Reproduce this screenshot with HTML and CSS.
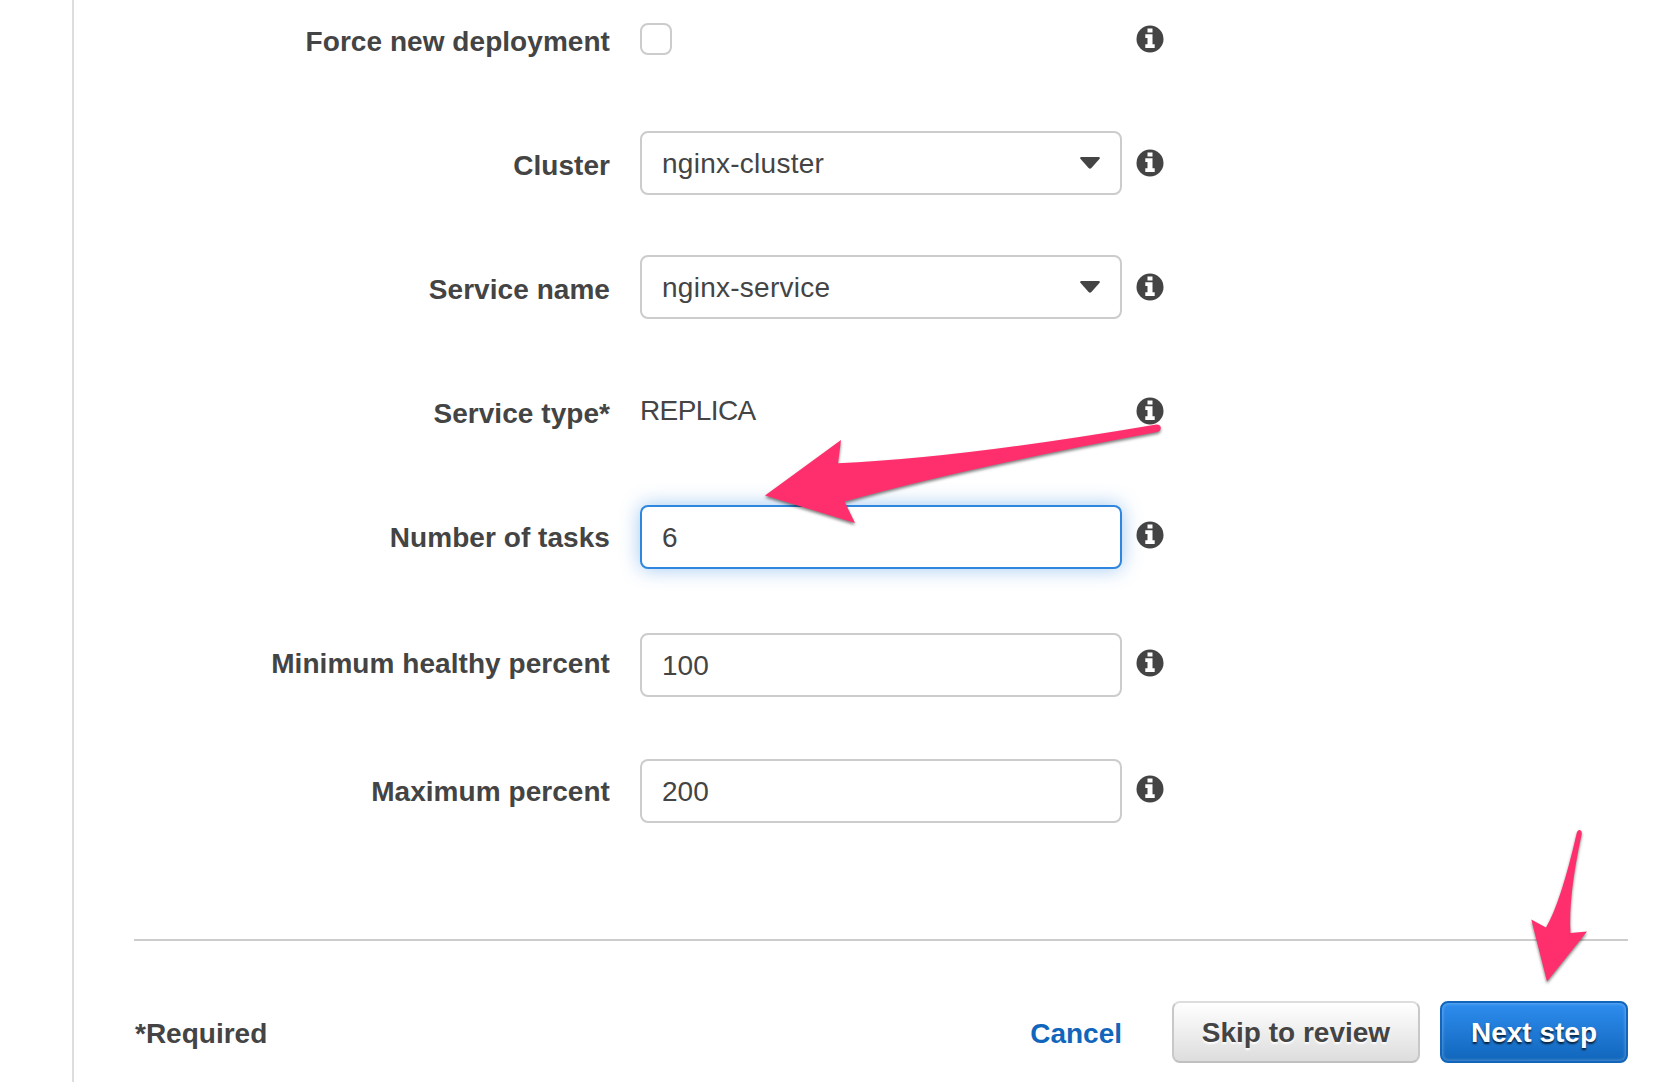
FILE: index.html
```html
<!DOCTYPE html>
<html lang="en">
<head>
<meta charset="utf-8">
<title>Configure service</title>
<link rel="stylesheet" href="styles.css">
</head>
<body>
<svg class="defs" width="0" height="0" aria-hidden="true">
  <symbol id="info" viewBox="0 0 28 28">
    <circle cx="14" cy="14" r="13.5" fill="#444"/>
    <path fill="#fff" d="M11.5 3.5h5v4h-5zM9.3 9.3h7.2v9.900h2.200v3.800H9.300v-3.800h2.200v-6.100H9.300z"/>
  </symbol>
  <symbol id="caret" viewBox="0 0 20 12">
    <path fill="#444" d="M1 0h18q1.4.6.6 1.8L11.4 11q-1.4 1.3-2.8 0L.4 1.8Q-.4.6 1 0z"/>
  </symbol>
</svg>
<div class="page">
  <aside class="rail"></aside>
  <main class="content">
    <form class="form">
      <div class="row">
        <label class="label">Force new deployment</label>
        <div class="control"><span class="checkbox"></span></div>
        <svg class="info"><use href="#info"/></svg>
      </div>
      <div class="row">
        <label class="label">Cluster</label>
        <div class="control box select"><span>nginx-cluster</span><svg class="caret"><use href="#caret"/></svg></div>
        <svg class="info"><use href="#info"/></svg>
      </div>
      <div class="row">
        <label class="label">Service name</label>
        <div class="control box select"><span>nginx-service</span><svg class="caret"><use href="#caret"/></svg></div>
        <svg class="info"><use href="#info"/></svg>
      </div>
      <div class="row">
        <label class="label">Service type*</label>
        <div class="control plain">REPLICA</div>
        <svg class="info"><use href="#info"/></svg>
      </div>
      <div class="row number tasks">
        <label class="label">Number of tasks</label>
        <input class="control box focused" value="6">
        <svg class="info"><use href="#info"/></svg>
      </div>
      <div class="row number minimum">
        <label class="label">Minimum healthy percent</label>
        <input class="control box" value="100">
        <svg class="info"><use href="#info"/></svg>
      </div>
      <div class="row number maximum">
        <label class="label">Maximum percent</label>
        <input class="control box" value="200">
        <svg class="info"><use href="#info"/></svg>
      </div>
    </form>
    <footer class="footer">
      <span class="required">*Required</span>
      <a class="cancel">Cancel</a>
      <button class="button secondary" type="button">Skip to review</button>
      <button class="button primary" type="button">Next step</button>
    </footer>
  </main>
</div>
<svg class="arrows" width="1668" height="1082" viewBox="0 0 1668 1082" aria-hidden="true">
  <path d="M765 495.5L841 440L838 463.3Q960 458 1156.500 424.500Q1160.800 424.500 1160.800 428Q1160.500 431.400 1157 432Q960 469 844.500 501.500L855 523Z"/>
  <path d="M1547 981.500L1531.300 919.500L1546 927.500Q1561 902 1577 832Q1578 829.700 1580 830Q1582 830.500 1581.800 833.500Q1568 897 1570.500 933L1587 931.500Z"/>
</svg>
</body>
</html>
```
FILE: styles.css
```css
* { box-sizing: border-box; }

body {
  margin: 0;
  background: #fff;
  color: #444;
  font: 28px/64px "Liberation Sans", Arial, sans-serif;
  overflow: hidden;
}

.defs { position: absolute; }

.page {
  display: flex;
  width: 1668px;
  height: 1082px;
}

.rail {
  width: 74px;
  border-right: 2px solid #ddd;
}

.content {
  flex: 1;
  padding: 7px 40px 0 60px;
}

.form {
  display: flex;
  flex-direction: column;
  gap: 60px;
  height: 932px;
}

.row {
  display: grid;
  grid-template-columns: 476px 482px 28px;
  column-gap: 30px;
  height: 64px;
}

.label {
  margin-top: 3px;
  text-align: right;
  font-weight: bold;
  letter-spacing: .05px;
  white-space: nowrap;
}

.info {
  width: 28px;
  height: 28px;
  margin: 18px 0 0 -16px;
}

.tasks { margin-top: 2px; }
.minimum { margin-top: 4px; }
.maximum { margin-top: 2px; }
.number .label { margin-top: 1px; }
.minimum .label { margin-top: -1px; }
.number .info { margin-top: 16px; }

.box {
  height: 64px;
  padding: 2px 20px 0;
  border: 2px solid #ccc;
  border-radius: 8px;
  background: #fff;
  color: #444;
  font: inherit;
  line-height: 60px;
  outline: 0;
}

.focused {
  border-color: #2e86de;
  box-shadow: 0 0 20px rgba(46, 134, 222, .45);
}

.select {
  display: flex;
  align-items: center;
  justify-content: space-between;
  letter-spacing: .26px;
}

.caret {
  width: 20px;
  height: 12px;
  margin-bottom: 2px;
}

.plain { letter-spacing: -.6px; }

.checkbox {
  display: block;
  width: 32px;
  height: 32px;
  margin-top: 16px;
  border: 2px solid #ccc;
  border-radius: 8px;
}

.footer {
  display: flex;
  align-items: flex-start;
  height: 124px;
  padding-top: 60px;
  border-top: 2px solid #ccc;
  font-weight: bold;
  line-height: 62px;
}

.required {
  flex: 1;
  padding: 2px 0 0 1px;
}

.cancel {
  padding-top: 2px;
  margin-right: 50px;
  color: #1166bb;
}

.button {
  height: 62px;
  padding: 2px 0 0;
  border: 2px solid;
  border-radius: 8px;
  font: inherit;
  line-height: 56px;
}

.secondary {
  width: 248px;
  margin-right: 20px;
  border-color: #ddd #c8c8c8 #c0c0c0;
  background: linear-gradient(#fff, #ddd);
  color: #444;
  text-shadow: 0 2px 2px #fff;
}

.primary {
  width: 188px;
  border-color: #1166bb;
  background: linear-gradient(#2e8def, #1166bb);
  box-shadow: inset 0 0 3px 1px rgba(255, 255, 255, .25);
  color: #fff;
  text-shadow: 0 2px 2px rgba(0, 0, 0, .75);
}

.arrows {
  position: absolute;
  top: 0;
  left: 0;
  fill: #ff2f6d;
  filter: drop-shadow(0 2px 1.5px rgba(0, 0, 0, .5));
  pointer-events: none;
}
```
